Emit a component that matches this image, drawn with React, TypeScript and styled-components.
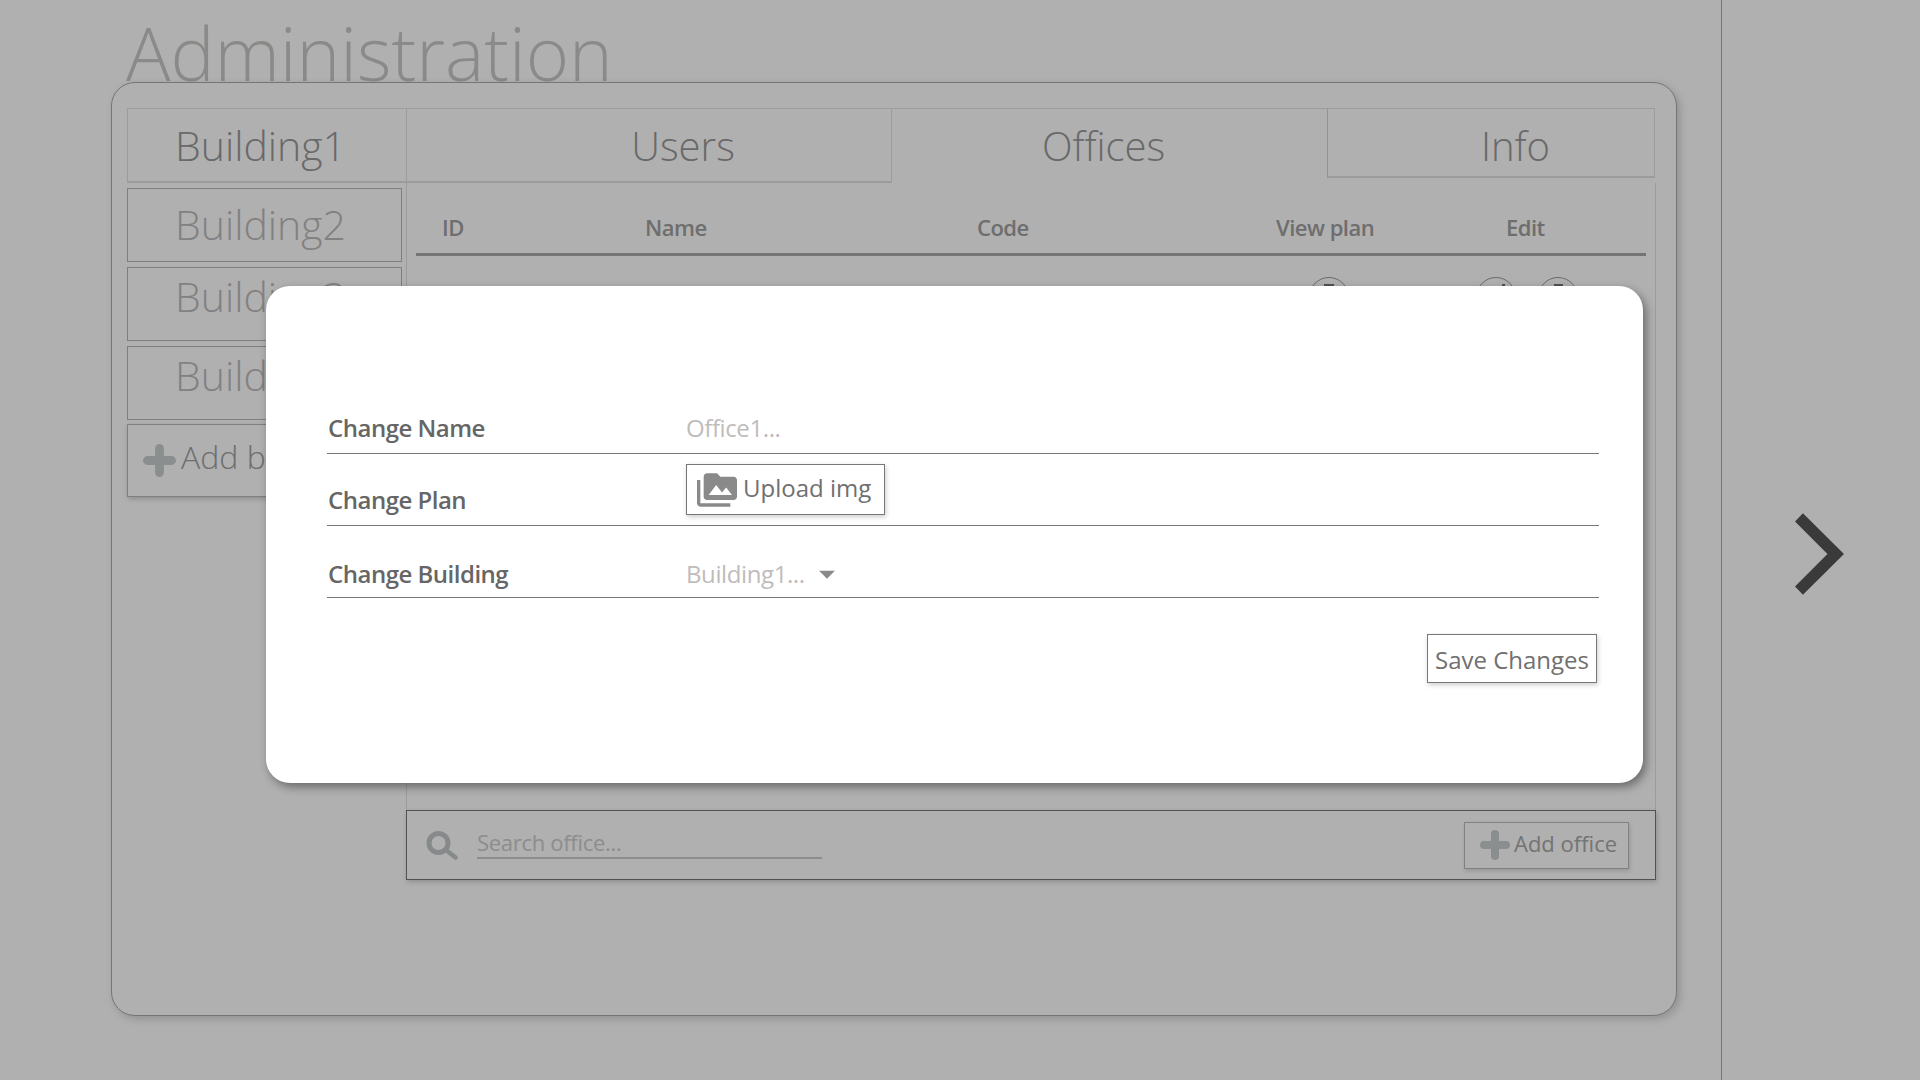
import React from 'react';
import styled, { createGlobalStyle } from 'styled-components';
import { MdPermMedia, MdArrowDropDown } from 'react-icons/md';

const BUILDINGS = [
  { name: 'Building2', line: 71 },
  { name: 'Building3', line: 56 },
  { name: 'Building4', line: 56 },
];
const COLUMNS = [
  { label: 'ID', width: 203 },
  { label: 'Name', width: 332 },
  { label: 'Code', width: 299 },
  { label: 'View plan', width: 230 },
  { label: 'Edit', width: 100 },
];
const FORM_ROWS = [
  { label: 'Change Name', kind: 'name', pad: 9 },
  { label: 'Change Plan', kind: 'plan', pad: 9 },
  { label: 'Change Building', kind: 'building', pad: 7 },
];

const PlusIcon = ({ size }: { size: number }) => (
  <svg width={size} height={size} viewBox="0 0 30 30">
    <path d="M15 4v22M4 15h22" stroke="#c8cece" strokeWidth="8" strokeLinecap="round" />
  </svg>
);

const SearchIcon = () => (
  <SearchSvg width="32" height="29" viewBox="0 0 32 29">
    <circle cx="12.5" cy="12" r="9.5" fill="none" stroke="#c4c8c8" strokeWidth="5" />
    <path d="M20 19l9.5 7.5" stroke="#c4c8c8" strokeWidth="4.5" strokeLinecap="round" />
  </SearchSvg>
);

// round buttons of the table row, only their top shows above the modal
const RowIcon = ({ mark, mr }: { mark: string; mr?: number }) => (
  <RowIconSvg $mr={mr} width="40" height="40" viewBox="0 0 40 40">
    <circle cx="20" cy="20" r="19.5" fill="none" stroke="#999" strokeWidth="1" />
    <path d={mark} stroke="#777" strokeWidth="2" />
  </RowIconSvg>
);

const App = () => {
  return (
    <Page>
      <GlobalStyle />
      <Main>
        <Title>Administration</Title>
        <Card>
          <Side>
            <SideTab>Building1</SideTab>
            {BUILDINGS.map((b) => (
              <BuildingItem key={b.name} $line={b.line}>{b.name}</BuildingItem>
            ))}
            <AddBuilding>
              <PlusIcon size={33} />
              <AddBuildingText>Add building</AddBuildingText>
            </AddBuilding>
          </Side>
          <Content>
            <Tabs>
              <UsersTab>Users</UsersTab>
              <OfficesTab>Offices</OfficesTab>
              <InfoTab>Info</InfoTab>
            </Tabs>
            <Panel>
              <HeaderRow>
                {COLUMNS.map((col) => (
                  <HeaderCell key={col.label} $w={col.width}>{col.label}</HeaderCell>
                ))}
              </HeaderRow>
              <IconRow>
                <RowIcon mark="M15 8h10" mr={127} />
                <RowIcon mark="M26 8h3" mr={22} />
                <RowIcon mark="M16 8h9" />
              </IconRow>
            </Panel>
            <SearchBar>
              <SearchIcon />
              <SearchInput>Search office...</SearchInput>
              <AddOffice>
                <PlusIcon size={30} />
                <AddOfficeText>Add office</AddOfficeText>
              </AddOffice>
            </SearchBar>
          </Content>
        </Card>
      </Main>
      <NextArea>
        <svg width="49" height="82" viewBox="0 0 148 246">
          <polygon points="24,0 148,123 24,246 0,221 98,123 0,25" fill="#555" />
        </svg>
      </NextArea>
      <Backdrop />
      <Modal>
        {FORM_ROWS.map((row) => (
          <FormRow key={row.label} $pad={row.pad}>
            <FormLabel>{row.label}</FormLabel>
            {row.kind === 'name' && <Placeholder>Office1...</Placeholder>}
            {row.kind === 'plan' && (
              <UploadButton>
                <MdPermMedia size={40} color="#8a8a8a" />
                <UploadText>Upload img</UploadText>
              </UploadButton>
            )}
            {row.kind === 'building' && (
              <Placeholder>
                Building1...
                <DropIcon size={38} />
              </Placeholder>
            )}
          </FormRow>
        ))}
        <SaveRow>
          <SaveButton>Save Changes</SaveButton>
        </SaveRow>
      </Modal>
    </Page>
  );
};

export default App;

const GlobalStyle = createGlobalStyle`
  html, body {
    margin: 0;
    padding: 0;
    background: #fff;
    overflow: hidden;
  }
  * {
    box-sizing: border-box;
  }
`;

const Page = styled.div`
  width: 1920px;
  height: 1080px;
  display: flex;
  position: relative;
  overflow: hidden;
  background: #fff;
  font-family: 'Open Sans', 'Noto Sans', sans-serif;
`;

const Main = styled.div`
  width: 1722px;
  padding-left: 111px;
  border-right: 1px solid #aaa;
`;

const Title = styled.h1`
  margin: 0;
  height: 82px;
  padding-left: 15px;
  font-size: 74px;
  line-height: 105px;
  font-weight: 300;
  color: #c8c8c6;
  white-space: nowrap;
`;

const Card = styled.div`
  position: relative;
  width: 1566px;
  height: 934px;
  padding: 25px 21px 0 15px;
  display: flex;
  background: #fff;
  border: 1px solid #aaa;
  border-radius: 24px;
  box-shadow: 3px 3px 8px rgba(0, 0, 0, 0.18);
`;

const Side = styled.div`
  width: 279px;
  flex: none;
`;

const SideTab = styled.div`
  height: 75px;
  padding-left: 47px;
  border: 1px solid #e2e2e2;
  border-right: 0;
  border-bottom: 2px solid #e2e2e2;
  font-size: 41px;
  font-weight: 300;
  line-height: 73px;
  color: #999;
`;

const BuildingItem = styled.div<{ $line: number }>`
  width: 275px;
  height: 74px;
  margin-top: 5px;
  padding-left: 47px;
  border: 1px solid #b8b8b8;
  font-size: 41px;
  font-weight: 300;
  line-height: ${(p) => p.$line}px;
  color: #bcbcbc;
`;

const AddBuilding = styled.div`
  width: 275px;
  height: 73px;
  margin-top: 4px;
  padding-left: 15px;
  display: flex;
  align-items: center;
  gap: 5px;
  border: 1px solid #b8b8b8;
  box-shadow: 1px 2px 5px rgba(0, 0, 0, 0.2);
  white-space: nowrap;
  overflow: hidden;
`;

const AddBuildingText = styled.span`
  padding-bottom: 8px;
  font-size: 32px;
  font-weight: 300;
  color: #a0a0a0;
`;

const Content = styled.div`
  flex: 1;
  display: flex;
  flex-direction: column;
`;

const Tabs = styled.div`
  display: flex;
  height: 75px;
`;

const TabBase = styled.div`
  border-top: 1px solid #e2e2e2;
  text-align: center;
  font-size: 40px;
  font-weight: 300;
  line-height: 74px;
  color: #999;
`;

const UsersTab = styled(TabBase)`
  width: 486px;
  height: 75px;
  padding-left: 68px;
  border-left: 1px solid #e2e2e2;
  border-right: 1px solid #e2e2e2;
  border-bottom: 2px solid #e2e2e2;
`;

const OfficesTab = styled(TabBase)`
  width: 435px;
  height: 75px;
  padding-right: 12px;
`;

const InfoTab = styled(TabBase)`
  width: 328px;
  height: 70px;
  padding-left: 49px;
  border-left: 1px solid #d4d4d4;
  border-right: 1px solid #e2e2e2;
  border-bottom: 2px solid #e2e2e2;
`;

const Panel = styled.div`
  width: 1250px;
  height: 627px;
  padding: 0 9px;
  border-left: 1px solid #e2e2e2;
  border-right: 1px solid #e2e2e2;
`;

const HeaderRow = styled.div`
  height: 73px;
  padding: 29px 0 0 26px;
  display: flex;
  border-bottom: 3px solid #a8a8a8;
`;

const HeaderCell = styled.div<{ $w: number }>`
  width: ${(p) => p.$w}px;
  font-size: 22px;
  font-weight: 600;
  letter-spacing: -0.5px;
  color: #a0a0a0;
`;

const IconRow = styled.div`
  padding: 21px 0 0 893px;
  display: flex;
`;

const RowIconSvg = styled.svg<{ $mr?: number }>`
  flex: none;
  margin-right: ${(p) => p.$mr ?? 0}px;
`;

const SearchBar = styled.div`
  width: 1250px;
  height: 70px;
  padding: 0 26px 0 19px;
  display: flex;
  align-items: center;
  border: 1px solid #777;
  box-shadow: 1px 2px 5px rgba(0, 0, 0, 0.2);
`;

const SearchSvg = styled.svg`
  flex: none;
`;

const SearchInput = styled.div`
  width: 345px;
  margin: 0 0 2px 19px;
  padding-bottom: 1px;
  border-bottom: 2px solid #ccc;
  font-size: 22px;
  letter-spacing: -0.3px;
  line-height: 27px;
  color: #ccc;
`;

const AddOffice = styled.div`
  width: 165px;
  height: 47px;
  margin-left: auto;
  padding-left: 15px;
  display: flex;
  align-items: center;
  gap: 4px;
  border: 1px solid #bbb;
  box-shadow: 1px 2px 4px rgba(0, 0, 0, 0.15);
  white-space: nowrap;
`;

const AddOfficeText = styled.span`
  padding-bottom: 4px;
  font-size: 22px;
  color: #a8a8a8;
`;

const NextArea = styled.div`
  flex: 1;
  display: flex;
  align-items: center;
  justify-content: center;
  padding: 28px 3px 0 0;
`;

const Backdrop = styled.div`
  position: absolute;
  inset: 0;
  background: rgba(0, 0, 0, 0.31);
`;

const Modal = styled.div`
  position: absolute;
  left: 266px;
  top: 286px;
  width: 1377px;
  height: 497px;
  padding: 96px 44px 0 61px;
  background: #fff;
  border-radius: 24px;
  box-shadow: 3px 4px 10px rgba(0, 0, 0, 0.4);
`;

const FormRow = styled.div<{ $pad: number }>`
  height: 72px;
  padding-bottom: ${(p) => p.$pad}px;
  display: flex;
  align-items: flex-end;
  border-bottom: 1px solid #777;
`;

const FormLabel = styled.div`
  width: 359px;
  padding-left: 1px;
  font-size: 24px;
  font-weight: 600;
  letter-spacing: -0.5px;
  color: #666;
`;

const Placeholder = styled.div`
  display: flex;
  align-items: center;
  font-size: 24px;
  letter-spacing: -0.4px;
  color: #c0bcbc;
`;

const DropIcon = styled(MdArrowDropDown)`
  margin: -8px 0 -8px 3px;
  color: #8a8a8a;
`;

const UploadButton = styled.div`
  width: 199px;
  height: 51px;
  margin-bottom: 1px;
  padding-left: 10px;
  display: flex;
  align-items: center;
  gap: 6px;
  border: 1px solid #777;
  box-shadow: 1px 2px 5px rgba(0, 0, 0, 0.2);
  white-space: nowrap;
`;

const UploadText = styled.span`
  padding-bottom: 4px;
  font-size: 24px;
  color: #707070;
`;

const SaveRow = styled.div`
  display: flex;
  justify-content: flex-end;
  padding: 36px 2px 0 0;
`;

const SaveButton = styled.div`
  width: 170px;
  height: 49px;
  padding-top: 1px;
  display: flex;
  align-items: center;
  justify-content: center;
  border: 1px solid #777;
  box-shadow: 1px 2px 5px rgba(0, 0, 0, 0.2);
  font-size: 24px;
  color: #707070;
  white-space: nowrap;
`;
